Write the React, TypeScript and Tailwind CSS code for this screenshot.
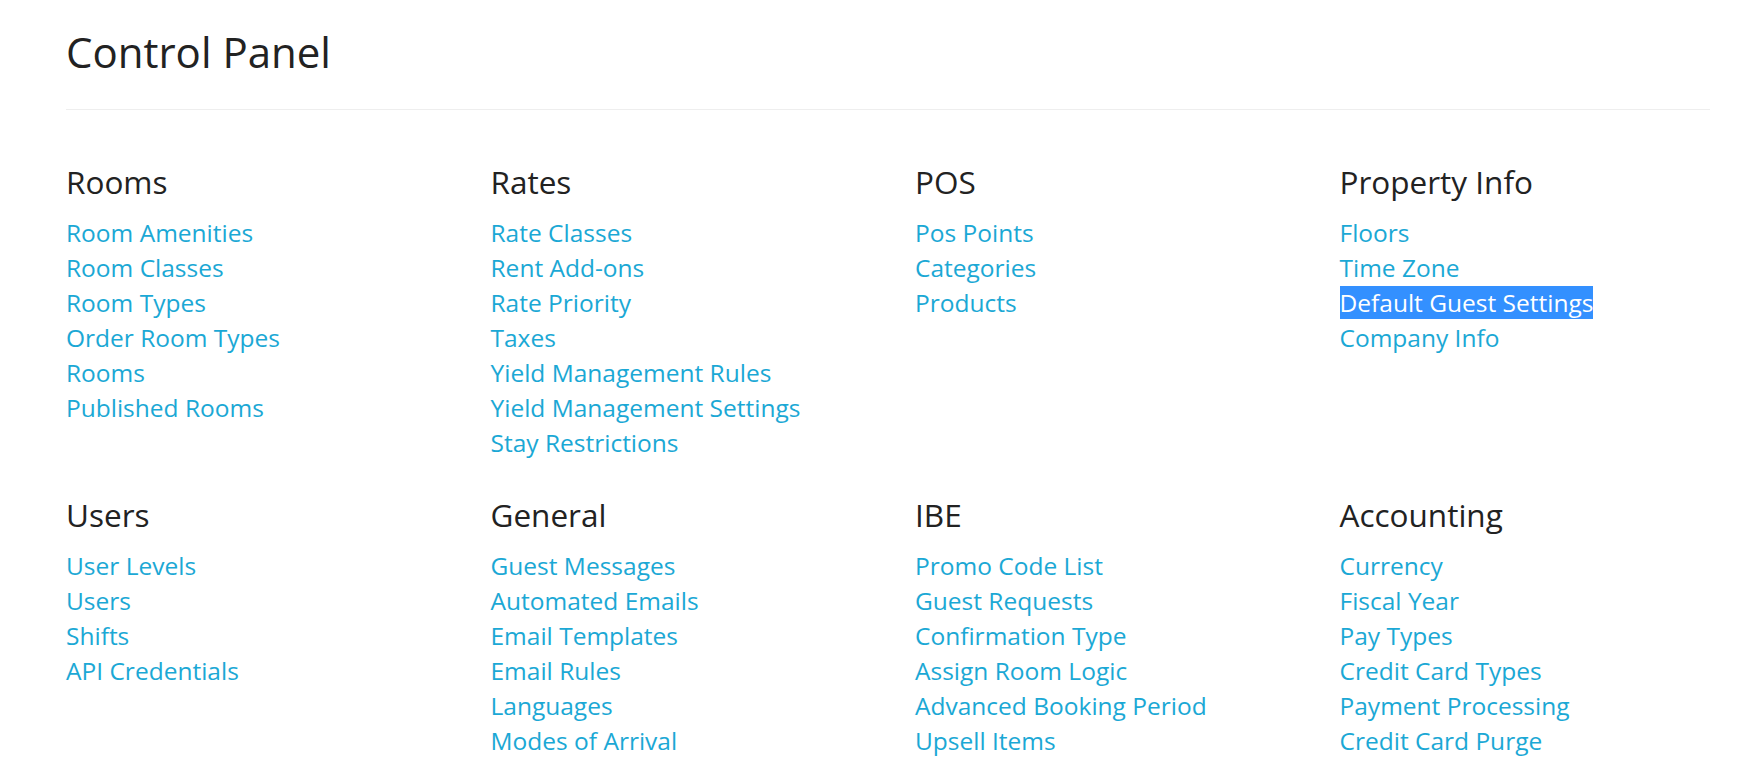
import React from "react";

interface Section {
  title: string;
  links: string[];
}

const sections: Section[] = [
  {
    title: "Rooms",
    links: ["Room Amenities", "Room Classes", "Room Types", "Order Room Types", "Rooms", "Published Rooms"],
  },
  {
    title: "Rates",
    links: [
      "Rate Classes",
      "Rent Add-ons",
      "Rate Priority",
      "Taxes",
      "Yield Management Rules",
      "Yield Management Settings",
      "Stay Restrictions",
    ],
  },
  { title: "POS", links: ["Pos Points", "Categories", "Products"] },
  {
    title: "Property Info",
    links: ["Floors", "Time Zone", "Default Guest Settings", "Company Info"],
  },
  { title: "Users", links: ["User Levels", "Users", "Shifts", "API Credentials"] },
  {
    title: "General",
    links: ["Guest Messages", "Automated Emails", "Email Templates", "Email Rules", "Languages", "Modes of Arrival"],
  },
  {
    title: "IBE",
    links: [
      "Promo Code List",
      "Guest Requests",
      "Confirmation Type",
      "Assign Room Logic",
      "Advanced Booking Period",
      "Upsell Items",
    ],
  },
  {
    title: "Accounting",
    links: ["Currency", "Fiscal Year", "Pay Types", "Credit Card Types", "Payment Processing", "Credit Card Purge"],
  },
];

const selected = "Default Guest Settings";

export default function App() {
  return (
    <div className="min-h-[760px] bg-white pl-[66px] pr-[36px] pt-[23px] font-['Open_Sans',sans-serif] text-[#222]">
      <h1 className="text-[42px] leading-[57px] font-normal">Control Panel</h1>
      <div className="mt-[29px] border-t border-[#eeeeee]" />

      <div className="mt-[55px] grid grid-cols-4 gap-x-[54px] gap-y-[38px]">
        {sections.map((section) => (
          <div key={section.title}>
            <h2 className="text-[31.5px] leading-[33px] font-normal">{section.title}</h2>
            <ul className="mt-[17px]">
              {section.links.map((link) => (
                <li key={link} className="text-[24.5px] leading-[35px]">
                  <a
                    href="#"
                    className={
                      link === selected
                        ? "bg-[#3390ff] text-white"
                        : "text-[#1ba8d5] hover:underline"
                    }
                  >
                    {link}
                  </a>
                </li>
              ))}
            </ul>
          </div>
        ))}
      </div>
    </div>
  );
}
